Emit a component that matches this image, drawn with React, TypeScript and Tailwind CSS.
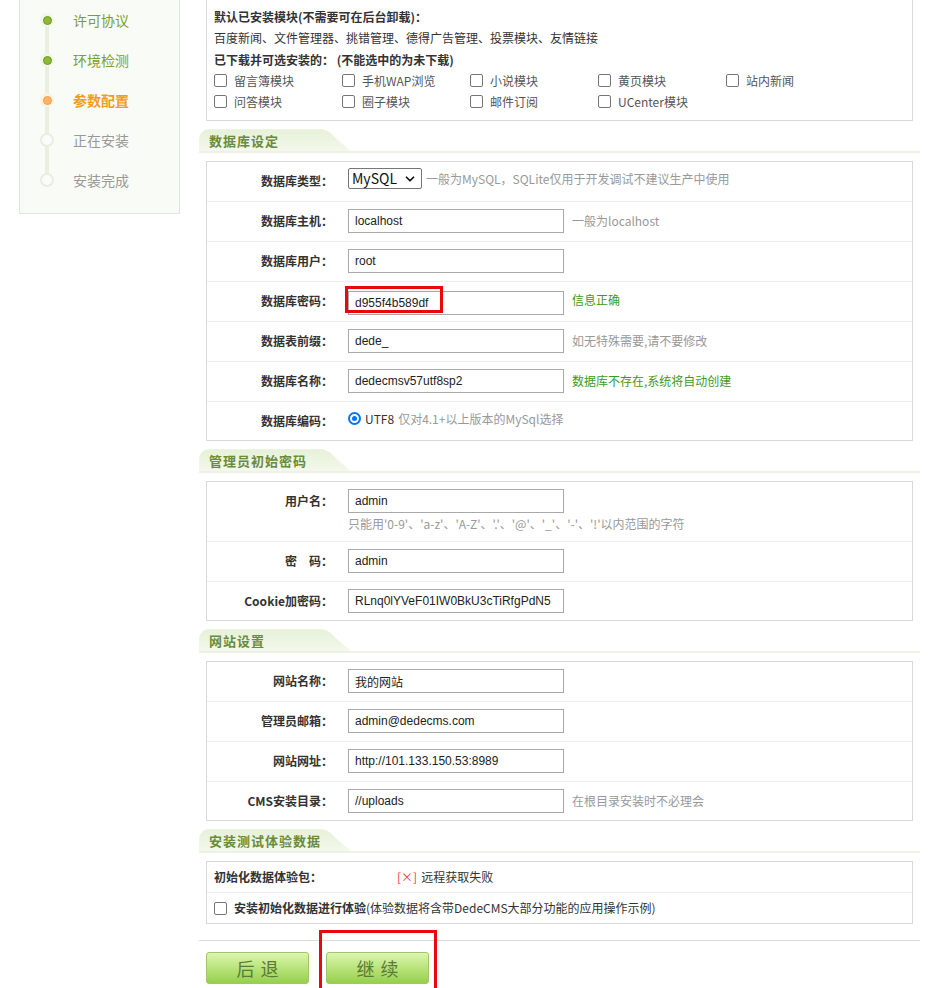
import { ChevronDown } from 'lucide-react';

const cjk = "font-['Noto_Sans_CJK_SC',sans-serif]";
const latin = "font-['Liberation_Sans','Noto_Sans_CJK_SC',sans-serif]";

const steps = [
  { name: '许可协议', state: 'done' },
  { name: '环境检测', state: 'done' },
  { name: '参数配置', state: 'current' },
  { name: '正在安装', state: 'todo' },
  { name: '安装完成', state: 'todo' },
];

function Dot({ state }: { state: string }) {
  if (state === 'done') {
    return (
      <span className="w-[14px] h-[14px] rounded-full bg-[#f1f6e8] flex items-center justify-center">
        <span className="w-[9px] h-[9px] rounded-full bg-[#8cba30] border border-[#6d9a1e]" />
      </span>
    );
  }
  if (state === 'current') {
    return (
      <span className="w-[14px] h-[14px] rounded-full bg-[#fdf1e2] flex items-center justify-center">
        <span className="w-[9px] h-[9px] rounded-full bg-[#fbb466] border border-[#f4a042]" />
      </span>
    );
  }
  return <span className="w-[14px] h-[14px] rounded-full bg-[#fbfcf9] border-2 border-[#e9ede3]" />;
}

function Sidebar() {
  return (
    <div className="w-[161px] h-[214px] shrink-0 border border-t-0 border-[#e2e4df] bg-[#f9fbf6] relative">
      <div className="absolute left-[25px] top-[20px] h-[160px] w-[4px] bg-[#eaf0e0]" />
      <div className="relative flex flex-col">
        {steps.map((s) => (
          <div key={s.name} className="h-[40px] flex items-center pl-[20px] gap-[19px]">
            <Dot state={s.state} />
            <span
              className={`text-[14px] ${
                s.state === 'done'
                  ? 'text-[#7ba12d]'
                  : s.state === 'current'
                  ? 'text-[#f39b1c] font-bold'
                  : 'text-[#999]'
              }`}
            >
              {s.name}
            </span>
          </div>
        ))}
      </div>
    </div>
  );
}

function Check() {
  return <span className="inline-block w-[13px] h-[13px] shrink-0 rounded-[2px] border border-[#767676] bg-white" />;
}

function SectionHead({ title }: { title: string }) {
  return (
    <div className="mt-[8px] h-[24px] border-b-2 border-[#edf2e5] flex">
      <div className="w-[152px] h-full rounded-tl-[10px] bg-gradient-to-b from-[#e6f1d7] to-[#f3f8ec] [clip-path:polygon(0_0,124px_0,131px_3px,138px_10px,152px_100%,0_100%)] flex items-center pl-[10px]">
        <span className="text-[13px] font-bold tracking-[1px] text-[#6a8c3a]">{title}</span>
      </div>
    </div>
  );
}

function Box({ children }: { children: React.ReactNode }) {
  return <div className="mt-[8px] mx-[7px] border border-[#d9d9d9] bg-white">{children}</div>;
}

function Row({
  label,
  children,
  tall,
}: {
  label: string;
  children: React.ReactNode;
  tall?: boolean;
}) {
  return (
    <div
      className={`flex border-b border-[#ededed] last:border-b-0 ${
        tall ? 'h-[60px] items-start pt-[7px]' : 'h-[40px] last:h-[38px] pb-[1px] items-center'
      }`}
    >
      <div className={`w-[126px] text-right text-[12px] font-bold text-[#333] ${tall ? 'leading-[24px]' : ''}`}>
        {label}
      </div>
      <div className="pl-[15px] flex items-center gap-[8px]">{children}</div>
    </div>
  );
}

function Field({ value }: { value: string }) {
  return (
    <input
      readOnly
      value={value}
      className={`w-[216px] h-[24px] border border-[#a9a9a9] px-[6px] text-[12px] text-[#222] outline-none ${latin}`}
    />
  );
}

function Note({ children, green }: { children: React.ReactNode; green?: boolean }) {
  return <span className={`text-[12px] ${green ? 'text-[#3c9a1c]' : 'text-[#999]'}`}>{children}</span>;
}

function GreenButton({ label }: { label: string }) {
  return (
    <div className="w-[103px] h-[32px] rounded-[3px] border border-[#9cc76a] bg-gradient-to-b from-[#ddf6b0] via-[#b9e37a] to-[#96d04a] flex items-center justify-center text-[18px] text-[#5a7a38] tracking-[6px] pl-[6px]">
      {label}
    </div>
  );
}

const modules = [
  '留言簿模块',
  '手机WAP浏览',
  '小说模块',
  '黄页模块',
  '站内新闻',
  '问答模块',
  '圈子模块',
  '邮件订阅',
  'UCenter模块',
];

export default function App() {
  return (
    <div className={`min-h-[988px] bg-white flex pl-[19px] gap-[19px] text-[#333] ${cjk}`}>
      <Sidebar />

      <div className="w-[721px] shrink-0">
        {/* modules */}
        <div className="mx-[7px] border border-t-0 border-[#d9d9d9] pt-[6px] pb-[8px] pl-[7px] text-[12px] leading-[21.25px]">
          <div className="font-bold">默认已安装模块(不需要可在后台卸载)：</div>
          <div>百度新闻、文件管理器、挑错管理、德得广告管理、投票模块、友情链接</div>
          <div className="font-bold">已下载并可选安装的： (不能选中的为未下载)</div>
          <div className="grid grid-cols-[repeat(5,128px)]">
            {modules.map((m) => (
              <div key={m} className="flex items-center gap-[7px] h-[21.25px] text-[#555]">
                <Check />
                <span>{m}</span>
              </div>
            ))}
          </div>
        </div>

        <SectionHead title="数据库设定" />
        <Box>
          <Row label="数据库类型：">
            <div className="flex items-center gap-[4px] -mt-[5px]">
              <div className="w-[74px] h-[21px] border border-[#767676] rounded-[2px] flex items-center justify-between pl-[3px] pr-[4px] text-[14px] text-[#111]">
                <span>MySQL</span>
                <ChevronDown size={14} strokeWidth={3} />
              </div>
              <Note>一般为MySQL，SQLite仅用于开发调试不建议生产中使用</Note>
            </div>
          </Row>
          <Row label="数据库主机：">
            <Field value="localhost" />
            <Note>一般为localhost</Note>
          </Row>
          <Row label="数据库用户：">
            <Field value="root" />
          </Row>
          <Row label="数据库密码：">
            <div className="relative">
              <Field value="d955f4b589df" />
              <div className="absolute -left-[3px] -top-[2px] w-[98px] h-[27px] border-[3px] border-[#e8080d]" />
            </div>
            <span className="-mt-[6px]">
              <Note green>信息正确</Note>
            </span>
          </Row>
          <Row label="数据表前缀：">
            <Field value="dede_" />
            <Note>如无特殊需要,请不要修改</Note>
          </Row>
          <Row label="数据库名称：">
            <Field value="dedecmsv57utf8sp2" />
            <span className="-mt-[4px]">
              <Note green>数据库不存在,系统将自动创建</Note>
            </span>
          </Row>
          <Row label="数据库编码：">
            <div className="flex items-center gap-[4px] -mt-[4px]">
              <span className="w-[13px] h-[13px] rounded-full border-2 border-[#0075ff] flex items-center justify-center">
                <span className="w-[5px] h-[5px] rounded-full bg-[#0075ff]" />
              </span>
              <span className="text-[12px] text-[#333]">UTF8</span>
              <Note>仅对4.1+以上版本的MySql选择</Note>
            </div>
          </Row>
        </Box>

        <SectionHead title="管理员初始密码" />
        <Box>
          <Row label="用户名：" tall>
            <div className="flex flex-col">
              <Field value="admin" />
              <span className="mt-[2px] text-[12px] text-[#999] leading-[18px] whitespace-nowrap">
                只能用'0-9'、'a-z'、'A-Z'、'.'、'@'、'_'、'-'、'!'以内范围的字符
              </span>
            </div>
          </Row>
          <Row label="密　码：">
            <Field value="admin" />
          </Row>
          <Row label="Cookie加密码：">
            <Field value="RLnq0lYVeF01IW0BkU3cTiRfgPdN5" />
          </Row>
        </Box>

        <SectionHead title="网站设置" />
        <Box>
          <Row label="网站名称：">
            <Field value="我的网站" />
          </Row>
          <Row label="管理员邮箱：">
            <Field value="admin@dedecms.com" />
          </Row>
          <Row label="网站网址：">
            <Field value="http://101.133.150.53:8989" />
          </Row>
          <Row label="CMS安装目录：">
            <Field value="//uploads" />
            <Note>在根目录安装时不必理会</Note>
          </Row>
        </Box>

        <SectionHead title="安装测试体验数据" />
        <Box>
          <div className="h-[31px] flex items-center pl-[7px] border-b border-[#ededed] text-[12px]">
            <span className="w-[183px] font-bold">初始化数据体验包：</span>
            <span className="text-[#e8413a]">[×]</span>
            <span className="ml-[4px]">远程获取失败</span>
          </div>
          <div className="h-[30px] flex items-center pl-[7px] gap-[7px] text-[12px]">
            <Check />
            <span>
              <b>安装初始化数据进行体验</b>(体验数据将含带DedeCMS大部分功能的应用操作示例)
            </span>
          </div>
        </Box>

        <div className="mt-[16px] border-t border-[#dcdcdc] pt-[11px] pl-[7px] flex gap-[17px]">
          <GreenButton label="后退" />
          <div className="relative">
            <GreenButton label="继续" />
            <div className="absolute -left-[7px] -top-[22px] w-[118px] h-[62px] border-[3px] border-[#e8080d]" />
          </div>
        </div>
      </div>
    </div>
  );
}
